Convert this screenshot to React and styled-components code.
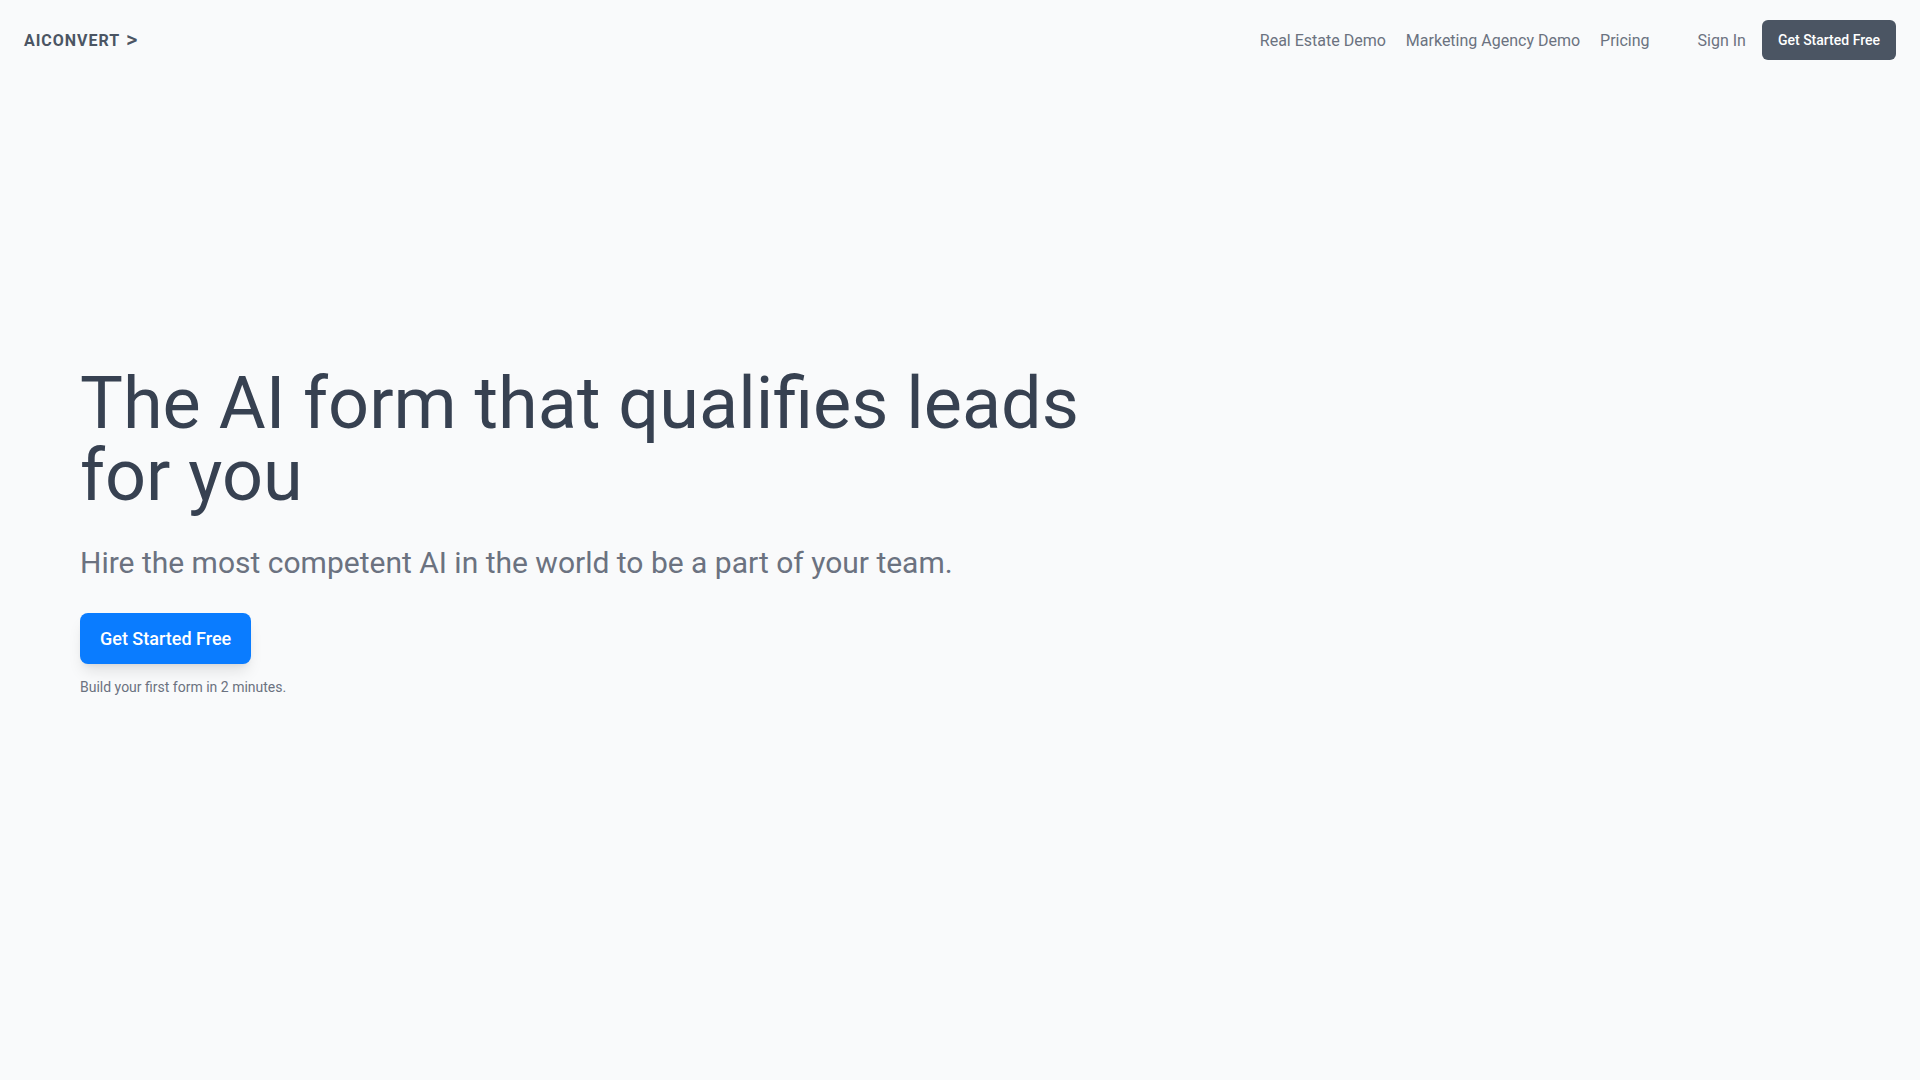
import React from "react";
import styled, { createGlobalStyle } from "styled-components";

const GlobalStyle = createGlobalStyle`
  * {
    box-sizing: border-box;
  }

  body {
    margin: 0;
    background: #f9fafb;
    font-family: Roboto, "Liberation Sans", Arial, sans-serif;
    color: #374151;
  }

  a {
    text-decoration: none;
  }
`;

const navLinks = ["Real Estate Demo", "Marketing Agency Demo", "Pricing"];

const App = () => {
  return (
    <Page>
      <GlobalStyle />
      <Header>
        <Logo href="#">
          AICONVERT <Chevron>&gt;</Chevron>
        </Logo>
        <Nav>
          <NavLinks>
            {navLinks.map((label) => (
              <NavLink key={label} href="#">
                {label}
              </NavLink>
            ))}
          </NavLinks>
          <Actions>
            <NavLink href="#">Sign In</NavLink>
            <NavButton href="#">Get Started Free</NavButton>
          </Actions>
        </Nav>
      </Header>

      <Hero>
        <Title>The AI form that qualifies leads for you</Title>
        <Subtitle>Hire the most competent AI in the world to be a part of your team.</Subtitle>
        <CtaButton href="#">Get Started Free</CtaButton>
        <Caption>Build your first form in 2 minutes.</Caption>
      </Hero>
    </Page>
  );
};

const Page = styled.div`
  min-height: 100vh;
  background: #f9fafb;
`;

const Header = styled.header`
  display: flex;
  align-items: center;
  justify-content: space-between;
  height: 80px;
  padding: 0 24px;
`;

const Logo = styled.a`
  display: inline-flex;
  align-items: center;
  font-size: 16px;
  font-weight: 700;
  letter-spacing: 0.06em;
  color: #4b5563;
`;

const Chevron = styled.span`
  margin-left: 6px;
  font-size: 22px;
  font-weight: 500;
  line-height: 1;
  letter-spacing: 0;
`;

const Nav = styled.nav`
  display: flex;
  align-items: center;
  gap: 48px;
`;

const NavLinks = styled.div`
  display: flex;
  align-items: center;
  gap: 20px;
`;

const Actions = styled.div`
  display: flex;
  align-items: center;
  gap: 16px;
`;

const NavLink = styled.a`
  font-size: 16px;
  color: #6b7280;
`;

const NavButton = styled.a`
  display: inline-flex;
  align-items: center;
  height: 40px;
  padding: 0 16px;
  border-radius: 6px;
  background: #4b5563;
  color: #fff;
  font-size: 14px;
  font-weight: 500;
`;

const Hero = styled.main`
  display: flex;
  flex-direction: column;
  align-items: flex-start;
  padding: 288px 80px 0;
`;

const Title = styled.h1`
  margin: 0;
  max-width: 1040px;
  font-size: 72px;
  font-weight: 400;
  line-height: 1;
  color: #374151;
`;

const Subtitle = styled.p`
  margin: 33px 0 0;
  font-size: 30px;
  line-height: 36px;
  color: #6b7280;
`;

const CtaButton = styled.a`
  display: inline-flex;
  align-items: center;
  margin-top: 32px;
  height: 51px;
  padding: 0 20px;
  border-radius: 8px;
  background: #0a7cff;
  color: #fff;
  font-size: 18px;
  font-weight: 500;
  box-shadow: 0 10px 15px -3px rgba(0, 0, 0, 0.1), 0 4px 6px -4px rgba(0, 0, 0, 0.1);
`;

const Caption = styled.p`
  margin: 13px 0 0;
  font-size: 14px;
  line-height: 20px;
  color: #6b7280;
`;

export default App;
